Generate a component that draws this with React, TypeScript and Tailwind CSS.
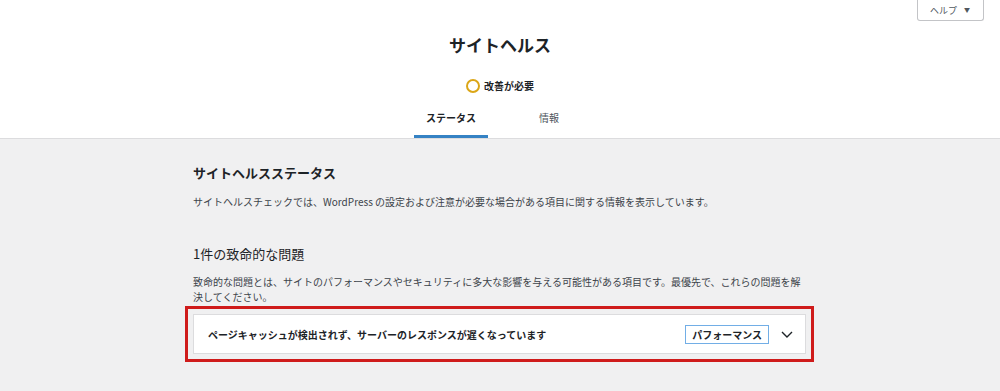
import { FC } from 'react';

const font = { fontFamily: '"Noto Sans CJK JP", "Noto Sans", sans-serif' };

const HelpButton: FC = () => (
  <button
    type="button"
    className="absolute top-0 right-[16px] flex h-[21px] items-center rounded-b-[3px] border border-t-0 border-[#c3c4c7] bg-white pl-[12px] pr-[13px] text-[9px] leading-none text-[#50575e]"
  >
    ヘルプ
    <span className="ml-[7px] text-[6px]">▼</span>
  </button>
);

const Header: FC = () => (
  <div className="relative flex flex-col items-center border-b border-[#dcdcde] bg-white pt-[33px]">
    <HelpButton />
    <h1 className="text-[17px] font-bold leading-[24px] text-[#1d2327]">サイトヘルス</h1>

    <div className="mt-[22px] flex h-[14px] items-center gap-[4px]">
      <span className="block h-[14px] w-[14px] rounded-full border-2 border-[#dba617]" />
      <span className="text-[10px] font-semibold leading-[14px] text-[#1d2327]">改善が必要</span>
    </div>

    <nav className="mt-[5px] grid grid-cols-2">
      <div className="w-[98px] px-[12px]">
        <a className="block pt-[12px] pb-[12px] text-center text-[10px] font-semibold leading-[16px] text-[#1d2327] shadow-[inset_0_-3px_#3582c4]">
          ステータス
        </a>
      </div>
      <div className="w-[98px] px-[12px]">
        <a className="block pt-[12px] pb-[12px] text-center text-[10px] leading-[16px] text-[#50575e]">
          情報
        </a>
      </div>
    </nav>
  </div>
);

const Issue: FC = () => (
  <div className="-mx-[8px] mt-[2px] border-[3px] border-[#cf1b1b] p-[5px]">
    <div className="flex h-[40px] items-center border border-[#dcdcde] bg-white pl-[14px] pr-[12px]">
      <span className="flex-1 text-[10px] font-semibold leading-[15px] text-[#1d2327]">
        ページキャッシュが検出されず、サーバーのレスポンスが遅くなっています
      </span>
      <span className="flex h-[19px] items-center border border-[#72aee6] px-[6px] text-[10px] font-semibold text-[#1d2327]">
        パフォーマンス
      </span>
      <svg className="ml-[12px]" width="12" height="7" viewBox="0 0 12 7" fill="none">
        <path d="M1 1l5 5 5-5" stroke="#1d2327" strokeWidth="1.4" />
      </svg>
    </div>
  </div>
);

const App: FC = () => {
  return (
    <div className="min-h-[391px] bg-[#f0f0f1]" style={font}>
      <Header />

      <main className="ml-[193px] w-[613px] pt-[25px]">
        <h2 className="text-[13px] font-semibold leading-[18px] text-[#1d2327]">
          サイトヘルスステータス
        </h2>
        <p className="mt-[12px] text-[10px] leading-[16px] text-[#3c434a]">
          サイトヘルスチェックでは、WordPress の設定および注意が必要な場合がある項目に関する情報を表示しています。
        </p>

        <h3 className="mt-[35px] text-[13px] leading-[18px] text-[#1d2327]">1件の致命的な問題</h3>
        <p className="mt-[11px] text-[10px] leading-[15px] text-[#3c434a]">
          致命的な問題とは、サイトのパフォーマンスやセキュリティに多大な影響を与える可能性がある項目です。最優先で、これらの問題を解決してください。
        </p>

        <Issue />
      </main>
    </div>
  );
};

export default App;
